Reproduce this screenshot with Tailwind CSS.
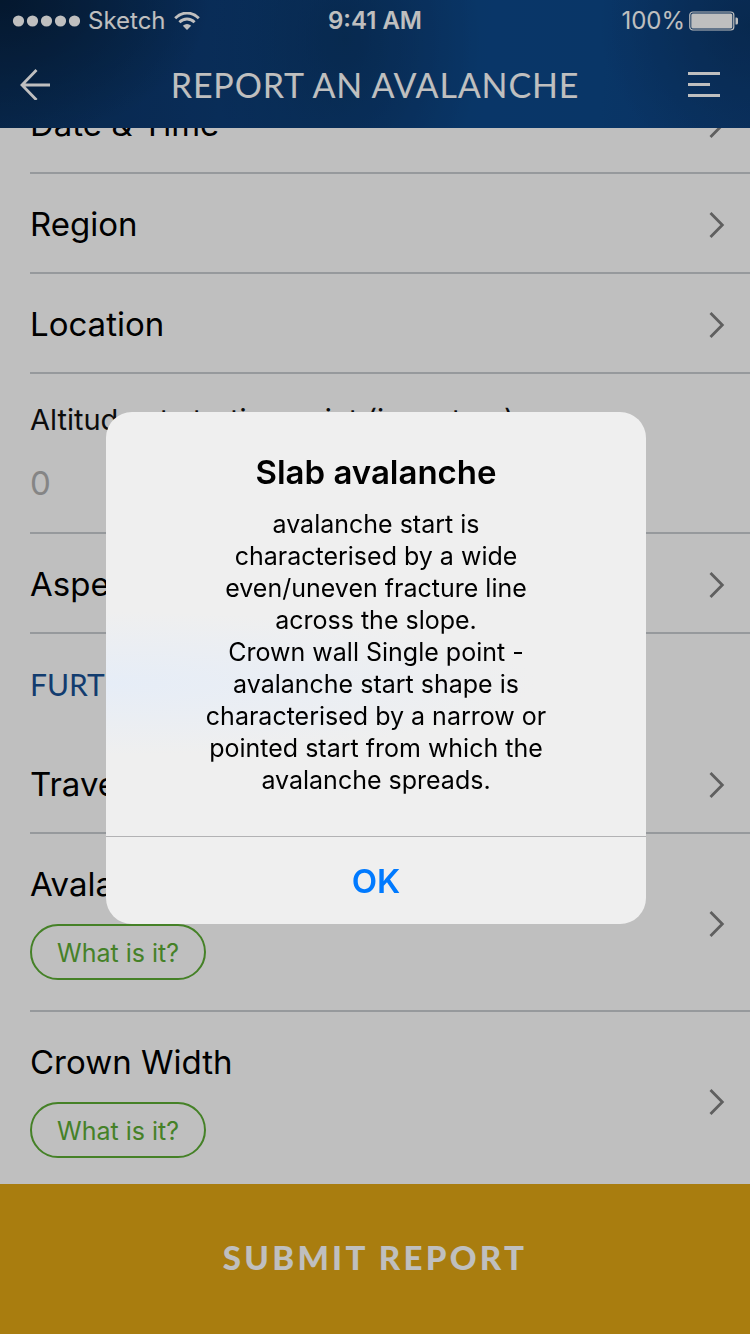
<!DOCTYPE html>
<html lang="en">
<head>
<meta charset="utf-8">
<meta name="viewport" content="width=device-width, initial-scale=1">
<title>Report an Avalanche</title>
<script src="https://cdn.jsdelivr.net/npm/@tailwindcss/browser@4"></script>
</head>
<body class="bg-white font-['Inter','Liberation_Sans',sans-serif] text-black">
<svg class="hidden" aria-hidden="true">
  <symbol id="chevron" viewBox="0 0 16 28"><path d="M1.5 2 L13.3 14 L1.5 26" fill="none" stroke="#7f7f7f" stroke-width="2.8"/></symbol>
</svg>
<div class="flex h-screen flex-col overflow-hidden">
  <header class="z-10 shrink-0 bg-[radial-gradient(ellipse_28%_110%_at_0%_0%,#06203e_0%,transparent_100%),radial-gradient(ellipse_18%_150%_at_46%_30%,#0a3564cc_0%,transparent_100%),radial-gradient(ellipse_20%_110%_at_100%_20%,#0a3464cc_0%,transparent_100%),linear-gradient(95deg,#0b3464_0%,#0c3c76_30%,#0d4484_50%,#0d498b_65%,#0d488a_80%,#0f4280_100%)] text-white">
    <div class="grid h-10 grid-cols-3 items-center px-3 pt-0.5 text-2xl">
      <div class="flex items-center gap-2">
        <svg class="h-3 w-[68px]" viewBox="0 0 68 12" fill="currentColor" aria-hidden="true"><circle cx="6.5" cy="6" r="5.6"/><circle cx="20.5" cy="6" r="5.6"/><circle cx="34.5" cy="6" r="5.6"/><circle cx="48.5" cy="6" r="5.6"/><circle cx="62.5" cy="6" r="5.6"/></svg>
        <span>Sketch</span>
        <svg class="h-[18px] w-[26px]" viewBox="0 0 26 18" aria-hidden="true"><g fill="none" stroke="currentColor" stroke-width="2.8"><path d="M1.2 6.2 C8 -0.7 18 -0.7 24.8 6.2"/><path d="M5.4 10.2 C9.8 5.9 16.2 5.9 20.6 10.2"/></g><path d="M13 18 L8.8 13.8 Q13 10.4 17.2 13.8Z" fill="currentColor"/></svg>
      </div>
      <span class="text-center font-semibold">9:41 AM</span>
      <div class="flex items-center justify-end gap-1">
        <span>100%</span>
        <svg class="h-5 w-[49px]" viewBox="0 0 49 20" aria-hidden="true"><rect x=".8" y="1" width="44" height="18" rx="3" fill="none" stroke="currentColor" stroke-width="1.2"/><rect x="2.3" y="2.5" width="41" height="15" rx="1.5" fill="currentColor"/><path d="M46.5 6.5h1q1.5 0 1.5 1.5v4q0 1.5-1.5 1.5h-1z" fill="currentColor"/></svg>
      </div>
    </div>
    <div class="flex h-[88px] items-center justify-between px-5">
      <button type="button" aria-label="Back" class="pr-3"><svg class="h-8 w-[30px]" viewBox="0 0 30 32" fill="none" stroke="currentColor" stroke-width="2.8"><path d="M16.5 2 L2 17 L16.5 32 M2 17 H30"/></svg></button>
      <h1 class="font-['Lato','Liberation_Sans',sans-serif] text-[34px] tracking-wide">REPORT AN AVALANCHE</h1>
      <button type="button" aria-label="Menu" class="pr-2.5"><svg class="h-7 w-8" viewBox="0 0 32 28" fill="currentColor"><path d="M0 2h32v3H0zM0 13h22v3H0zM0 24h32v3H0z"/></svg></button>
    </div>
  </header>

  <main class="flex min-h-0 flex-1 flex-col justify-end overflow-hidden">
    <div class="-mb-1.5 shrink-0 pl-[30px] text-[33px]">
      <a href="#date" class="flex h-[100px] items-center justify-between border-b-2 border-[#c9ccd0] pt-1 pr-[25px]">Date &amp; Time<svg class="h-7 w-4"><use href="#chevron"/></svg></a>
      <a href="#region" class="flex h-[100px] items-center justify-between border-b-2 border-[#c9ccd0] pt-1 pr-[25px]">Region<svg class="h-7 w-4"><use href="#chevron"/></svg></a>
      <a href="#location" class="flex h-[100px] items-center justify-between border-b-2 border-[#c9ccd0] pt-1 pr-[25px]">Location<svg class="h-7 w-4"><use href="#chevron"/></svg></a>
      <div class="flex h-40 flex-col border-b-2 border-[#c9ccd0] pt-6">
        <label for="altitude" class="text-[29px] leading-[44px] text-[#111]">Altitude at starting point (in meters)</label>
        <input id="altitude" type="text" inputmode="numeric" placeholder="0" class="mt-5 h-11 w-full bg-transparent outline-none placeholder:text-[#b2b2b2]">
      </div>
      <a href="#aspect" class="flex h-[100px] items-center justify-between border-b-2 border-[#c9ccd0] pt-1 pr-[25px]">Aspect<svg class="h-7 w-4"><use href="#chevron"/></svg></a>
      <h2 class="flex h-[100px] items-center font-['Lato','Liberation_Sans',sans-serif] text-[30px] text-[#185195]">FURTHER INFORMATION</h2>
      <a href="#travel" class="flex h-[100px] items-center justify-between border-b-2 border-[#c9ccd0] pt-1 pr-[25px]">Travel mode<svg class="h-7 w-4"><use href="#chevron"/></svg></a>
      <div class="flex h-[178px] items-center justify-between border-b-2 border-[#c9ccd0] pt-1 pr-[25px]">
        <div class="flex flex-col items-start gap-5 pb-1">
          <a href="#type" class="leading-10">Avalanche Type</a>
          <button type="button" class="h-14 rounded-full border-2 border-[#5cad35] px-[25px] pt-1 text-[25px] text-[#5cad35]">What is it?</button>
        </div>
        <svg class="h-7 w-4"><use href="#chevron"/></svg>
      </div>
      <div class="flex h-[178px] items-center justify-between border-b-2 border-[#c9ccd0] pt-1 pr-[25px]">
        <div class="flex flex-col items-start gap-5 pb-1">
          <a href="#crown" class="leading-10">Crown Width</a>
          <button type="button" class="h-14 rounded-full border-2 border-[#5cad35] px-[25px] pt-1 text-[25px] text-[#5cad35]">What is it?</button>
        </div>
        <svg class="h-7 w-4"><use href="#chevron"/></svg>
      </div>
    </div>
  </main>

  <button type="submit" class="z-10 h-[150px] shrink-0 bg-[#e2a714] pb-0.5 font-['Lato','Liberation_Sans',sans-serif] text-[33px] font-black tracking-widest text-white">SUBMIT REPORT</button>
</div>

<div class="fixed inset-0 z-20 flex items-center justify-center bg-black/25 pt-0.5 pl-0.5">
  <section role="alertdialog" aria-labelledby="dialog-title" aria-describedby="dialog-text" class="w-[540px] max-w-full overflow-hidden rounded-[26px] bg-[#efefef] bg-[radial-gradient(ellipse_80%_14%_at_0%_53%,#e6edf7_0%,transparent_100%)] text-center">
    <h2 id="dialog-title" class="pt-10 text-[33px] leading-10 font-semibold">Slab avalanche</h2>
    <p id="dialog-text" class="mt-4 pb-10 text-[25px] leading-8">avalanche start is<br>characterised by a wide<br>even/uneven fracture line<br>across the slope.<br>Crown wall Single point -<br>avalanche start shape is<br>characterised by a narrow or<br>pointed start from which the<br>avalanche spreads.</p>
    <button type="button" class="h-[88px] w-full border-t border-[#b2b2b4] pt-0.5 text-[33px] font-semibold text-[#007aff]">OK</button>
  </section>
</div>
</body>
</html>
